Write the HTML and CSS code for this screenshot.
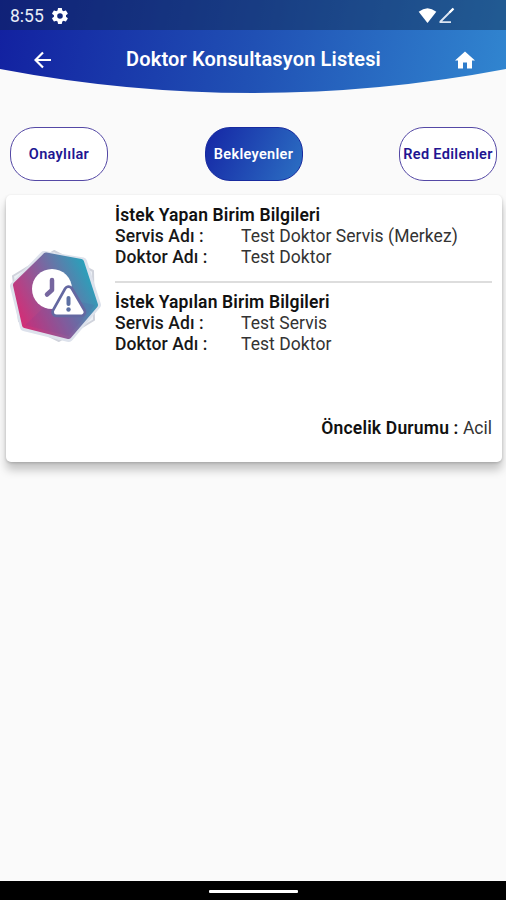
FILE: index.html
```html
<!DOCTYPE html>
<html lang="tr">
<head>
<meta charset="utf-8">
<title>Doktor Konsultasyon Listesi</title>
<link rel="stylesheet" href="styles.css">
</head>
<body>
<div class="screen">
  <header class="header">
    <div class="status">
      <span class="time">8:55</span>
      <svg class="gear" viewBox="2 2 20 20"><path fill="#fff" fill-rule="evenodd" d="M19.4 13c0-.3.1-.6.1-1s0-.7-.1-1l2.1-1.600c.2-.2.3-.4.1-.7l-2-3.400c-.1-.2-.4-.3-.6-.2l-2.500 1c-.5-.4-1.100-.7-1.700-1l-.4-2.600c0-.3-.2-.5-.5-.5h-4c-.2 0-.4.2-.5.5l-.4 2.600c-.6.3-1.100.6-1.700 1l-2.500-1c-.2-.1-.5 0-.6.2l-2 3.400c-.1.2-.1.5.1.7L4.500 11c0 .3-.1.6-.1 1s0 .7.1 1l-2.200 1.600c-.2.2-.2.5-.1.7l2 3.400c.1.2.4.3.6.2l2.500-1c.5.4 1.100.7 1.700 1l.4 2.600c0 .3.2.5.5.5h4c.2 0 .4-.2.5-.5l.4-2.600c.6-.3 1.100-.6 1.700-1l2.500 1c.2.1.5 0 .6-.2l2-3.400c.1-.2.1-.5-.1-.7zM12 15.500a3.500 3.500 0 1 1 0-7 3.500 3.500 0 0 1 0 7z"/></svg>
      <svg class="signals" viewBox="0 0 38 18"><path fill="#fff" d="M.7 4.700Q9.500-2.400 18.300 4.700L9.500 16z"/><path d="M21.500 15.200H33M22 15 35 2" fill="none" stroke="#dce5f2" stroke-width="1.800"/><path d="m31.500 5.500 4-4" stroke="#fff" stroke-width="2.200"/></svg>
    </div>
    <div class="appbar">
      <svg class="back" viewBox="0 0 18 18"><path d="M17 9H2M9 1.500 1.500 9 9 16.500" fill="none" stroke="#fff" stroke-width="2.200"/></svg>
      <h1 class="title">Doktor Konsultasyon Listesi</h1>
      <svg class="home" viewBox="2 3 20 17"><path fill="#fff" d="M10 20v-6h4v6h5v-8h3L12 3 2 12h3v8z"/></svg>
    </div>
  </header>
  <nav class="tabs">
    <button class="tab">Onaylılar</button>
    <button class="tab active">Bekleyenler</button>
    <button class="tab">Red Edilenler</button>
  </nav>
  <main class="card">
    <svg class="badge" viewBox="0 0 96 98">
      <defs><linearGradient id="badge-fill" x1=".05" y1=".75" x2=".95" y2=".3"><stop offset="0" stop-color="#d03078"/><stop offset=".5" stop-color="#80639f"/><stop offset="1" stop-color="#2c9fba"/></linearGradient></defs>
      <g stroke-linejoin="round">
        <path d="M46 4 85 24 86 73 51 94 11 74 5 29z" fill="#edf0f5" stroke="#d0d3dc" stroke-width="2"/>
        <path d="M36 8 75 14.500 89 58 61 91 16 80 6 39z" fill="#dde2ec" stroke="#dde2ec" stroke-width="8"/>
        <path d="M38 8.500 73 15 87 58 60.500 89 17 78 8 38z" fill="url(#badge-fill)" stroke="url(#badge-fill)" stroke-width="6"/>
        <path d="M47 50 87 58 60.500 89 17 78z" fill="#5a3f9b" opacity=".1"/>
        <circle cx="44" cy="42" r="20" fill="#fff"/>
        <path d="M44 33V43L39 47.500" fill="none" stroke="#76669f" stroke-width="4.500" stroke-linecap="round"/>
        <path d="M60.500 43.500 73 65H48.500z" fill="#6468a1" stroke="#6468a1" stroke-width="10.500"/>
        <path d="M60.500 43.500 73 65H48.500z" fill="#fff" stroke="#fff" stroke-width="5"/>
        <path d="M60.500 51V57" stroke="#5c70a3" stroke-width="4" stroke-linecap="round"/><circle cx="60.500" cy="62.500" r="2.200" fill="#5c70a3"/>
      </g>
    </svg>
    <div class="details">
      <section class="unit">
        <h2>İstek Yapan Birim Bilgileri</h2>
        <div class="row"><span class="label">Servis Adı :</span><span class="value">Test Doktor Servis (Merkez)</span></div>
        <div class="row"><span class="label">Doktor Adı :</span><span class="value">Test Doktor</span></div>
      </section>
      <section class="unit second">
        <h2>İstek Yapılan Birim Bilgileri</h2>
        <div class="row"><span class="label">Servis Adı :</span><span class="value">Test Servis</span></div>
        <div class="row"><span class="label">Doktor Adı :</span><span class="value">Test Doktor</span></div>
      </section>
      <p class="priority"><b>Öncelik Durumu :</b> Acil</p>
    </div>
  </main>
  <footer class="navbar"><span class="pill"></span></footer>
</div>
</body>
</html>
```
FILE: styles.css
```css
* { box-sizing: border-box; }
body { margin: 0; font-family: Roboto, "Liberation Sans", sans-serif; background: #fafafa; }
.screen { width: 506px; height: 900px; display: flex; flex-direction: column; overflow: hidden; }
.header {
  height: 94px;
  flex: none;
  background: linear-gradient(102deg, #1220a0 0%, #2050b4 50%, #3186d0 100%);
  clip-path: path("M0 0H506V69Q253 117 0 69Z");
}
.status { height: 30px; display: flex; align-items: center; padding: 2px 50px 0 10px; background: rgba(15, 35, 65, .42); color: #e9eef8; }
.time { font-size: 17.500px; width: 42px; }
.gear { width: 16px; height: 16px; }
.signals { width: 38px; height: 18px; margin-left: auto; }
.appbar { height: 60px; display: flex; align-items: center; padding: 0 31px 0 34px; }
.back { width: 18px; height: 18px; }
.title { flex: 1; margin: 0; text-align: center; color: #fff; font-size: 20px; font-weight: 600; letter-spacing: .16px; line-height: 24px; white-space: nowrap; padding-bottom: 2px; }
.home { width: 20px; height: 18px; }
.tabs { display: flex; justify-content: space-between; padding: 33px 9px 0 10px; flex: none; }
.tab { width: 98px; height: 54px; border: 1px solid #5448a5; border-radius: 25px; background: #fff; color: #211591; font: 600 14.500px/20px Roboto, sans-serif; letter-spacing: .32px; padding: 1px 0 0; white-space: nowrap; display: flex; align-items: center; justify-content: center; }
.tab.active { color: #fff; border-color: #182b9f; background: linear-gradient(115deg, #1526a5, #2c70c3); }
.card { margin: 14px 4px 0 6px; height: 267px; flex: none; display: flex; background: #fff; border-radius: 5px; box-shadow: 0 8px 10px rgba(0, 0, 0, .22), 0 1px 3px rgba(0, 0, 0, .18); }
.badge { width: 96px; height: 98px; margin: 52px 0 0 2px; flex: none; }
.details { flex: 1; margin: 10px 10px 0 11px; font-size: 17.500px; line-height: 21px; color: #333; white-space: nowrap; display: flex; flex-direction: column; }
.unit h2 { margin: 0; font-size: 17.500px; line-height: 21px; font-weight: 600; letter-spacing: .14px; color: #111; }
.row { display: flex; }
.label { width: 126px; font-weight: 500; letter-spacing: .08px; color: #181818; }
.value { font-weight: 400; letter-spacing: .06px; }
.second { margin-top: 13px; border-top: 2px solid #ddd; padding-top: 9px; }
.priority { margin: 63px 0 0; text-align: right; }
.priority b { font-weight: 600; letter-spacing: .18px; color: #111; }
.navbar { margin-top: auto; height: 19px; background: #000; display: flex; justify-content: center; padding-top: 9px; }
.pill { width: 89px; height: 3px; border-radius: 1px; background: #fff; }
```
